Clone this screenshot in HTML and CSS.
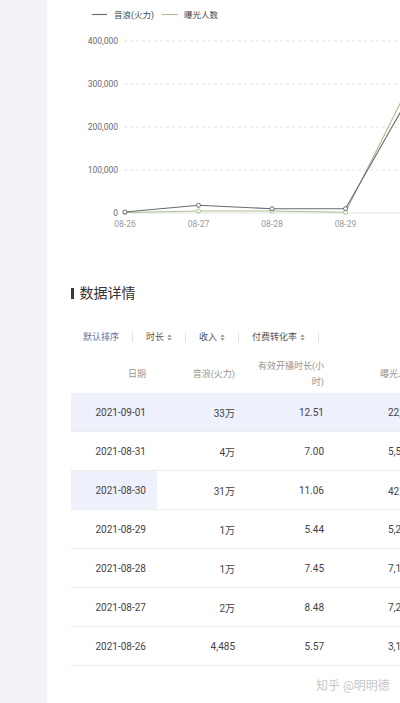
FILE: index.html
```html
<!DOCTYPE html>
<html lang="zh-CN">
<head>
<meta charset="utf-8">
<title>数据详情</title>
<link rel="stylesheet" href="styles.css">
</head>
<body>
<div class="page">
  <aside class="sidebar"></aside>
  <main class="main">
    <svg class="chart" width="353" height="245" viewBox="47 0 353 245" xmlns="http://www.w3.org/2000/svg">
      <g class="legend">
        <line x1="92" y1="14.5" x2="107" y2="14.5" class="l-dark"/>
        <text x="114" y="17.5" class="legend-text">音浪(火力)</text>
        <line x1="162" y1="14.5" x2="178" y2="14.5" class="l-green"/>
        <text x="184" y="17.5" class="legend-text">曝光人数</text>
      </g>
      <g class="grid">
        <line x1="124" y1="41" x2="400" y2="41"/>
        <line x1="124" y1="84" x2="400" y2="84"/>
        <line x1="124" y1="127" x2="400" y2="127"/>
        <line x1="124" y1="170" x2="400" y2="170"/>
      </g>
      <line x1="124" y1="213" x2="400" y2="213" class="zero"/>
      <g class="ylabels">
        <text x="118" y="44">400,000</text>
        <text x="118" y="87">300,000</text>
        <text x="118" y="130">200,000</text>
        <text x="118" y="173">100,000</text>
        <text x="118" y="216">0</text>
      </g>
      <g class="xlabels">
        <text x="125" y="227">08-26</text>
        <text x="198.5" y="227">08-27</text>
        <text x="272" y="227">08-28</text>
        <text x="345.5" y="227">08-29</text>
      </g>
      <polyline class="l-green" points="125,212.5 198.5,211 272,211 345.5,212.3 419,66"/>
      <polyline class="l-dark" points="125,212 198.5,205.3 272,208.7 345.5,208.7 419,79.6"/>
      <g class="dots-green">
        <circle cx="125" cy="212.5" r="2"/>
        <circle cx="198.5" cy="211" r="2"/>
        <circle cx="272" cy="211" r="2"/>
        <circle cx="345.5" cy="212.3" r="2"/>
      </g>
      <g class="dots-dark">
        <circle cx="125" cy="212" r="2"/>
        <circle cx="198.5" cy="205.3" r="2"/>
        <circle cx="272" cy="208.7" r="2"/>
        <circle cx="345.5" cy="208.7" r="2"/>
      </g>
    </svg>

    <section class="details">
      <h2 class="section-title">数据详情</h2>
      <div class="sortbar">
        <span class="sort active">默认排序</span>
        <span class="sep"></span>
        <span class="sort">时长<svg class="arrows" width="5" height="7" viewBox="0 0 5 7"><polygon points="0.3,2.8 2.5,0.4 4.7,2.8"/><polygon points="0.3,4.2 2.5,6.6 4.7,4.2"/></svg></span>
        <span class="sep"></span>
        <span class="sort">收入<svg class="arrows" width="5" height="7" viewBox="0 0 5 7"><polygon points="0.3,2.8 2.5,0.4 4.7,2.8"/><polygon points="0.3,4.2 2.5,6.6 4.7,4.2"/></svg></span>
        <span class="sep"></span>
        <span class="sort">付费转化率<svg class="arrows" width="5" height="7" viewBox="0 0 5 7"><polygon points="0.3,2.8 2.5,0.4 4.7,2.8"/><polygon points="0.3,4.2 2.5,6.6 4.7,4.2"/></svg></span>
        <span class="sep"></span>
      </div>

      <div class="table">
        <div class="row head">
          <div class="cell">日期</div>
          <div class="cell">音浪(火力)</div>
          <div class="cell">有效开播时长(小<br>时)</div>
          <div class="cell left head-left">曝光人数</div>
        </div>
        <div class="row hl">
          <div class="cell">2021-09-01</div>
          <div class="cell">33万</div>
          <div class="cell">12.51</div>
          <div class="cell left">22,306</div>
        </div>
        <div class="row">
          <div class="cell">2021-08-31</div>
          <div class="cell">4万</div>
          <div class="cell">7.00</div>
          <div class="cell left">5,586</div>
        </div>
        <div class="row">
          <div class="cell hl">2021-08-30</div>
          <div class="cell">31万</div>
          <div class="cell">11.06</div>
          <div class="cell left">42万</div>
        </div>
        <div class="row">
          <div class="cell">2021-08-29</div>
          <div class="cell">1万</div>
          <div class="cell">5.44</div>
          <div class="cell left">5,236</div>
        </div>
        <div class="row">
          <div class="cell">2021-08-28</div>
          <div class="cell">1万</div>
          <div class="cell">7.45</div>
          <div class="cell left">7,118</div>
        </div>
        <div class="row">
          <div class="cell">2021-08-27</div>
          <div class="cell">2万</div>
          <div class="cell">8.48</div>
          <div class="cell left">7,265</div>
        </div>
        <div class="row">
          <div class="cell">2021-08-26</div>
          <div class="cell">4,485</div>
          <div class="cell">5.57</div>
          <div class="cell left">3,152</div>
        </div>
      </div>
    </section>

    <div class="watermark">知乎 @明明德</div>
  </main>
</div>
</body>
</html>
```

FILE: styles.css
```css
html, body {
  margin: 0;
  padding: 0;
  background: #ffffff;
}

body {
  font-family: Roboto, "Noto Sans CJK SC", sans-serif;
  color: #444;
}

.page {
  display: flex;
  width: 400px;
  height: 703px;
  overflow: hidden;
}

.sidebar {
  width: 47px;
  flex: none;
  background: #f2f3f8;
}

.main {
  flex: 1;
  position: relative;
  overflow: hidden;
  background: #ffffff;
}

/* ---------- chart ---------- */
.chart {
  display: block;
  font-family: Roboto, "Noto Sans CJK SC", sans-serif;
}

.legend-text {
  font-size: 8.5px;
  fill: #444;
}

.l-dark {
  fill: none;
  stroke: #646b74;
  stroke-width: 1.1;
}

.l-green {
  fill: none;
  stroke: #a9bf8e;
  stroke-width: 1.1;
}

.grid line {
  stroke: #d8d8d8;
  stroke-width: 0.8;
  stroke-dasharray: 3 3;
}

.zero {
  stroke: #e4e4e4;
  stroke-width: 1;
}

.ylabels text {
  font-size: 8.5px;
  fill: #6a6a6a;
  text-anchor: end;
}

.xlabels text {
  font-size: 8.5px;
  fill: #9a9a9a;
  text-anchor: middle;
}

.dots-dark circle {
  fill: #ffffff;
  stroke: #646b74;
  stroke-width: 1;
}

.dots-green circle {
  fill: #ffffff;
  stroke: #a9bf8e;
  stroke-width: 1;
}

/* ---------- details ---------- */
.details {
  padding-left: 24px;
}

.section-title {
  margin: 38px 0 0 0;
  display: flex;
  align-items: center;
  gap: 6px;
  font-size: 14px;
  line-height: 20px;
  font-weight: 400;
  color: #333;
}

.section-title::before {
  content: "";
  width: 2.5px;
  height: 11px;
  background: #3a3a3a;
}

.sortbar {
  margin-top: 27px;
  height: 14px;
  display: flex;
  align-items: center;
  gap: 13px;
  padding-left: 12px;
  font-size: 9px;
  line-height: 14px;
  color: #555;
  white-space: nowrap;
}

.sort {
  display: flex;
  align-items: center;
  gap: 3px;
}

.sort.active {
  color: #6a6f9c;
}

.arrows polygon {
  fill: #8a8a8a;
}

.sep {
  width: 1px;
  height: 10px;
  background: #e2e2e2;
}

/* ---------- table ---------- */
.table {
  margin-top: 10px;
  width: 353px;
}

.row {
  display: grid;
  grid-template-columns: 86px 89px 89px 89px;
  height: 39px;
  box-sizing: border-box;
  border-bottom: 1px solid #ececec;
  font-size: 10px;
  color: #444;
}

.row.head {
  border-bottom: none;
  font-size: 9px;
  color: #959595;
  line-height: 16px;
}

.row.hl,
.cell.hl {
  background: #eef0fb;
}

.cell {
  display: flex;
  align-items: center;
  justify-content: flex-end;
  text-align: right;
  padding-right: 11px;
  white-space: nowrap;
}

.cell.left {
  justify-content: flex-start;
  text-align: left;
  padding-left: 53px;
  padding-right: 0;
}

.cell.head-left {
  padding-left: 45px;
}

/* ---------- watermark ---------- */
.watermark {
  position: absolute;
  left: 269px;
  top: 678px;
  font-size: 12px;
  line-height: 16px;
  color: #c8c8c8;
  white-space: nowrap;
}
```
